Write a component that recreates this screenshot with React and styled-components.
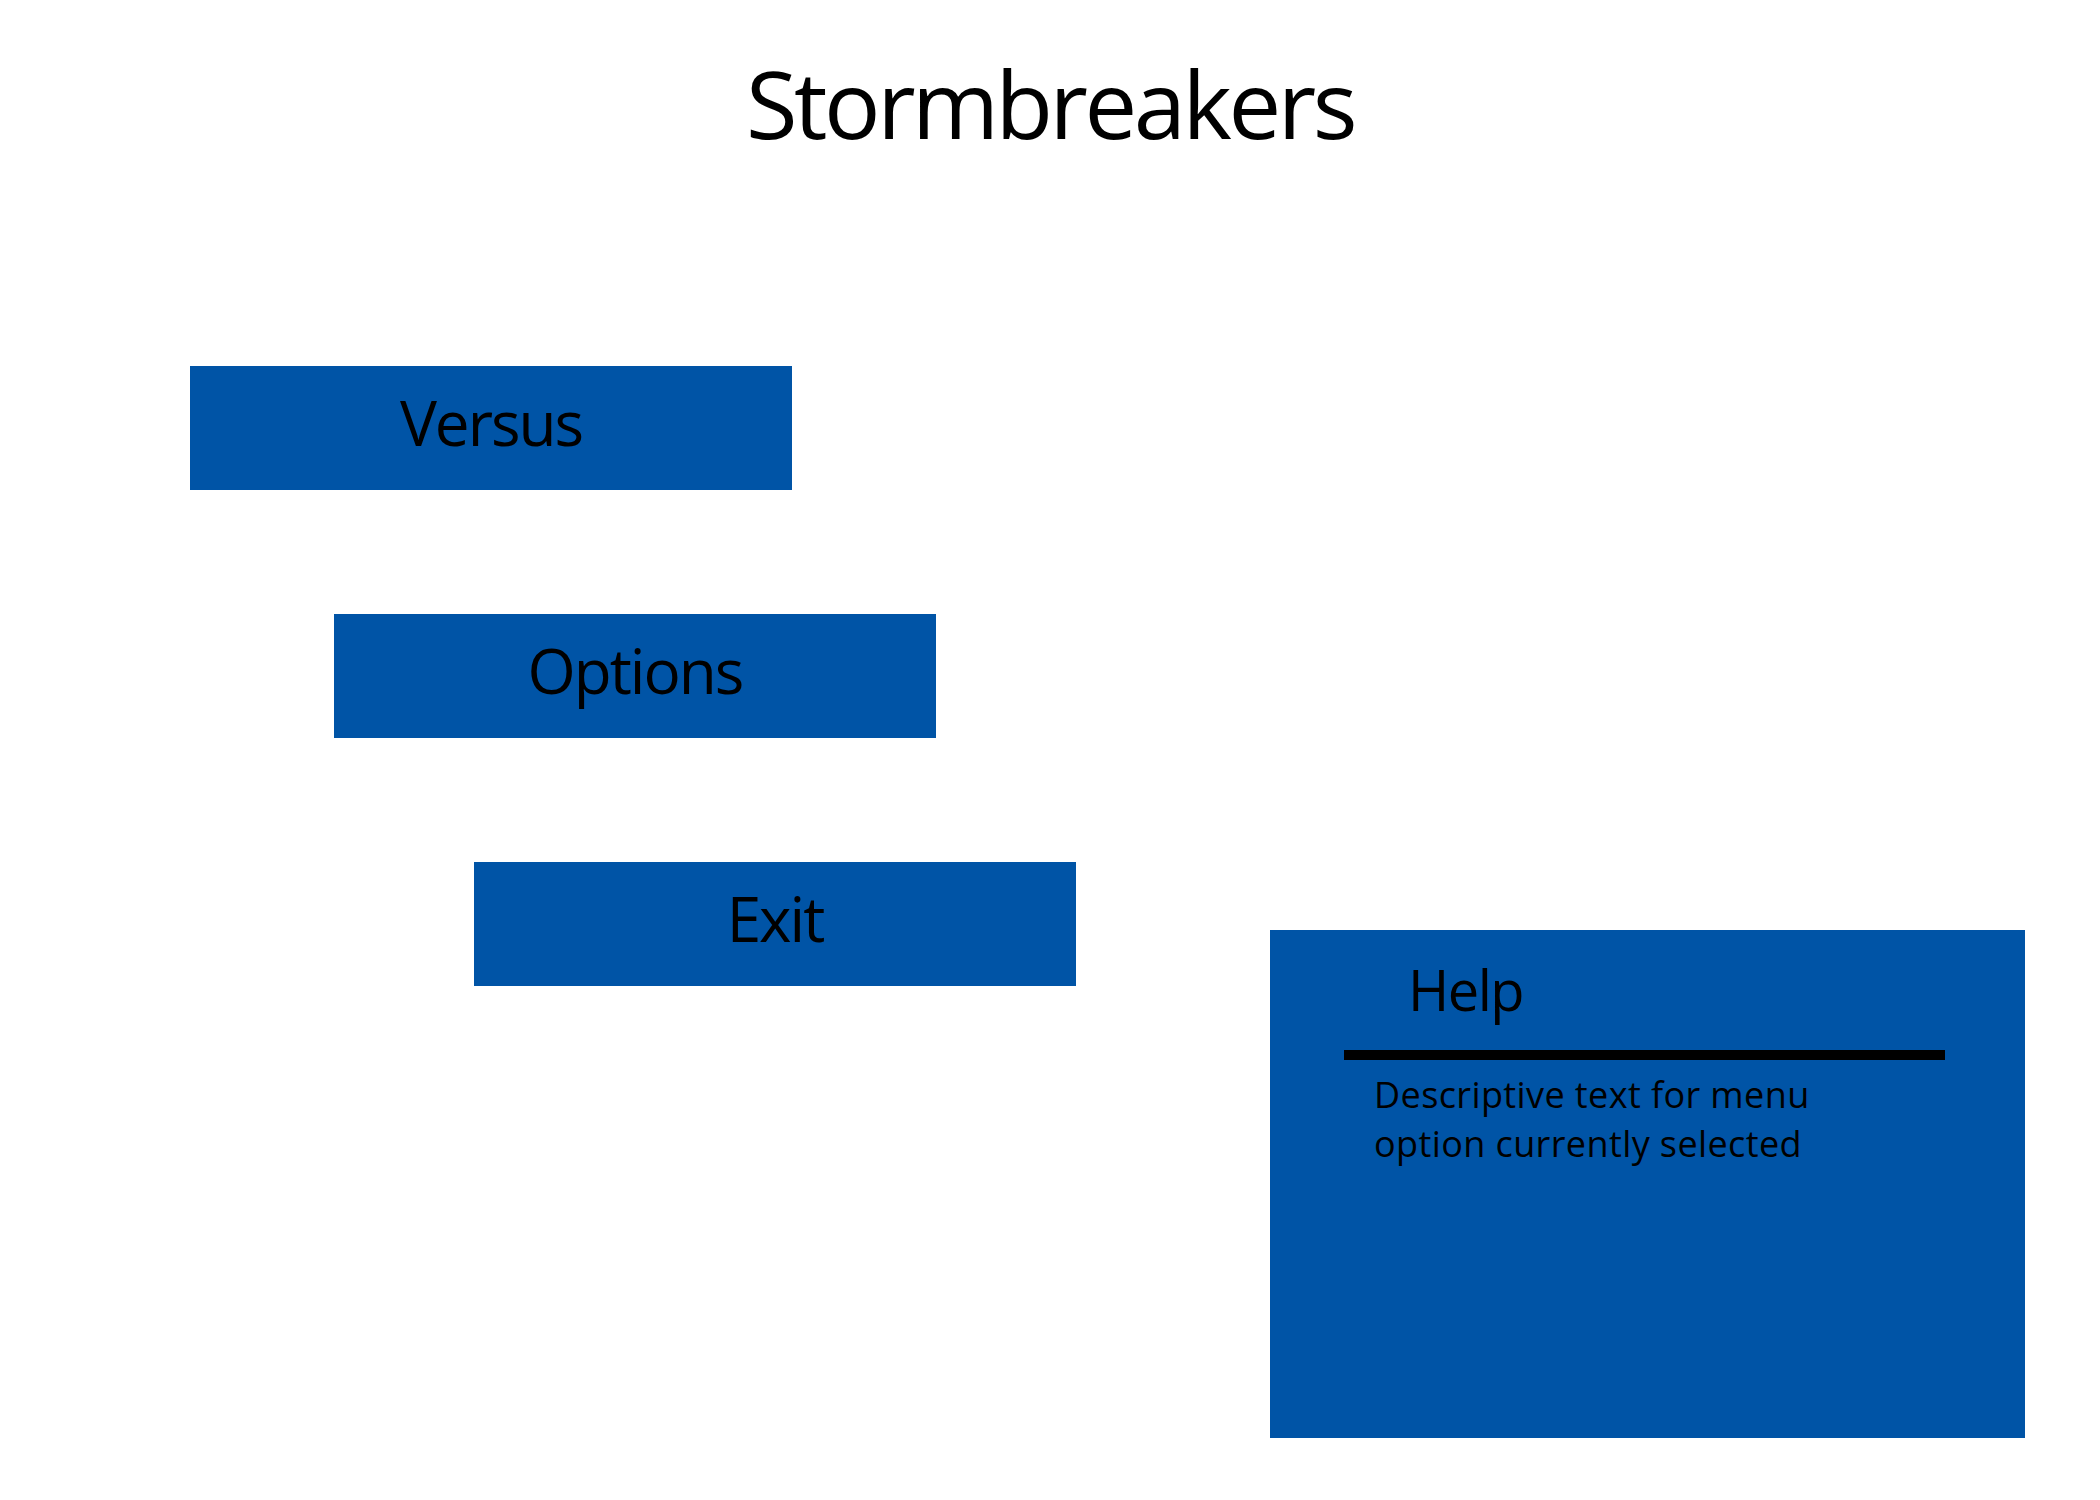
import React from "react";
import styled, { createGlobalStyle } from "styled-components";

const GlobalStyle = createGlobalStyle`
  html, body {
    margin: 0;
    padding: 0;
    background: #ffffff;
  }

  body {
    font-family: "Open Sans", "Liberation Sans", sans-serif;
    color: #000000;
  }
`;

const BLUE = "#0054a6";

const Page = styled.div`
  width: 2100px;
  min-height: 1500px;
  display: flex;
  flex-flow: column;
`;

const Title = styled.h1`
  margin: 0;
  padding-top: 56px;
  font-size: 94px;
  line-height: 94px;
  font-weight: 400;
  letter-spacing: -3.5px;
  text-align: center;
`;

const Content = styled.div`
  display: flex;
  align-items: flex-start;
  margin-top: 216px;
`;

const Menu = styled.nav`
  display: flex;
  flex-flow: column;
  align-items: flex-start;
  gap: 124px;
  padding-left: 190px;
`;

const MenuButton = styled.div`
  display: flex;
  align-items: center;
  justify-content: center;
  box-sizing: border-box;
  width: 602px;
  height: 124px;
  padding-bottom: 12px;
  margin-left: ${(p) => p.$indent}px;

  background: ${BLUE};
  font-size: 62px;
  line-height: 62px;
  letter-spacing: -2px;
  cursor: pointer;
`;

const HelpPanel = styled.section`
  box-sizing: border-box;
  width: 755px;
  height: 508px;
  margin-left: 194px;
  margin-top: 564px;
  padding: 31px 80px 0 74px;

  background: ${BLUE};
`;

const HelpTitle = styled.h2`
  margin: 0;
  padding-left: 64px;
  font-size: 56px;
  line-height: 56px;
  font-weight: 400;
  letter-spacing: -1.5px;
`;

const Rule = styled.hr`
  margin: 33px 0 0;
  height: 10px;
  border: none;
  background: #000000;
`;

const Description = styled.p`
  margin: 10px 0 0;
  padding-left: 30px;
  width: 500px;
  font-size: 36px;
  line-height: 49px;
  letter-spacing: 0.4px;
`;

const items = [
  { label: "Versus", indent: 0 },
  { label: "Options", indent: 144 },
  { label: "Exit", indent: 284 },
];

export default function App() {
  return (
    <Page>
      <GlobalStyle />
      <Title>Stormbreakers</Title>
      <Content>
        <Menu>
          {items.map((item) => (
            <MenuButton key={item.label} $indent={item.indent}>
              {item.label}
            </MenuButton>
          ))}
        </Menu>
        <HelpPanel>
          <HelpTitle>Help</HelpTitle>
          <Rule />
          <Description>
            Descriptive text for menu option currently selected
          </Description>
        </HelpPanel>
      </Content>
    </Page>
  );
}
